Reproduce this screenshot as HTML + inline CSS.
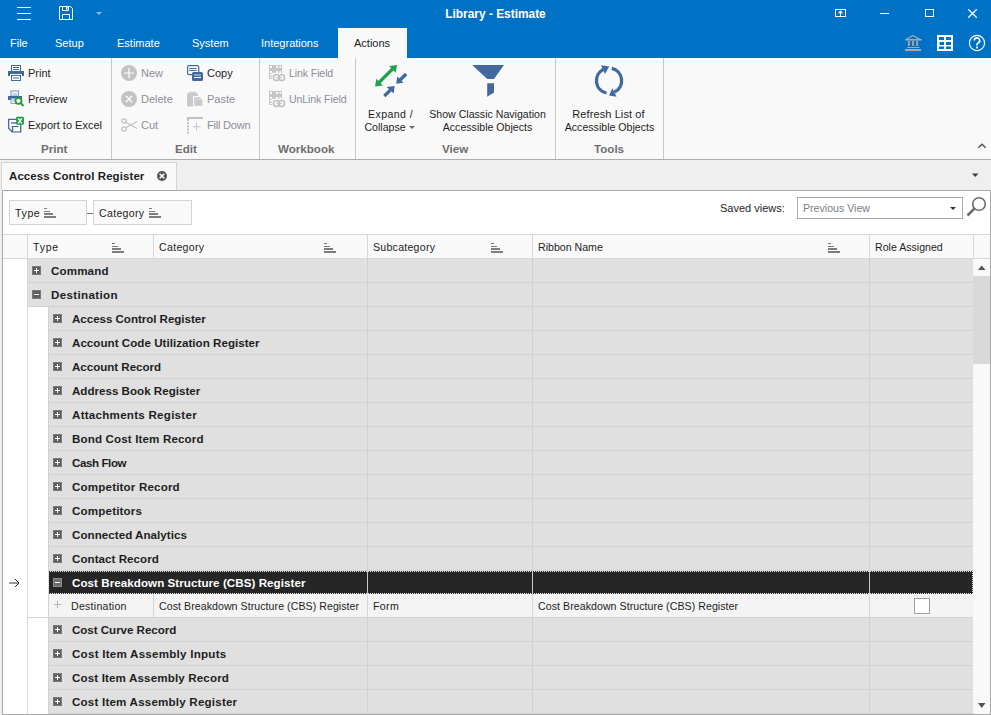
<!DOCTYPE html>
<html><head><meta charset="utf-8">
<style>
*{margin:0;padding:0;box-sizing:border-box}
html,body{width:991px;height:715px;overflow:hidden;background:#efefef;font-family:"Liberation Sans",sans-serif;font-size:10.6px;color:#1e1e1e}
.a{position:absolute;white-space:nowrap}
#title{position:absolute;left:0;top:0;width:991px;height:58px;background:#0072c6}
.wt{color:#fff}
#ribbon{position:absolute;left:0;top:58px;width:991px;height:102px;background:#f9f9f9;border-bottom:1px solid #adadad}
.sep{position:absolute;top:0;width:1px;height:101px;background:#c6c6c6}
.gl{position:absolute;top:84px;font-weight:bold;font-size:11.6px;color:#6f6f6f;line-height:14px}
.dis{color:#8d8d99}
#doctabs{position:absolute;left:0;top:160px;width:991px;height:30px;background:#efefef}
#panel{position:absolute;left:2px;top:190px;width:989px;height:525px;background:#fff;border:1px solid #a9a9a9}
.row{position:absolute;height:24px}
.bx{position:absolute;width:9px;height:9px;background:#5e5e5e;border:1px solid #7a7a7a}
.bx:before{content:"";position:absolute;left:1px;top:3px;width:5px;height:1px;background:#fff}
.bx.p:after{content:"";position:absolute;left:3px;top:1px;width:1px;height:5px;background:#fff}
.gt{position:absolute;top:4px;font-weight:bold;font-size:11.6px;line-height:16px;color:#1e1e1e}
.vl{position:absolute;width:1px;background:#d0d0d0}
.hl{position:absolute;height:1px;background:#d2d2d2}
</style></head><body>
<div id="title">
  <!-- hamburger -->
  <div class="a" style="left:17px;top:7px;width:14px;height:1px;background:#fff"></div>
  <div class="a" style="left:17px;top:13px;width:14px;height:1px;background:#fff"></div>
  <div class="a" style="left:17px;top:19px;width:14px;height:1px;background:#fff"></div>
  <!-- save -->
  <svg class="a" style="left:58px;top:5px" width="16" height="16" viewBox="0 0 16 16"><path d="M1.5 1.5h11l2 2v11h-13z" fill="none" stroke="#fff"/><path d="M4.5 1.5v4h6v-4M4.5 14.5v-5h7v5" fill="none" stroke="#fff"/><rect x="8" y="2" width="1.5" height="2.5" fill="#fff"/></svg>
  <svg class="a" style="left:96px;top:12px" width="7" height="4"><path d="M0 0h6l-3 3z" fill="#8fb9e2"/></svg>
  <div class="a wt" style="left:0;top:7px;width:991px;text-align:center;font-weight:bold;font-size:11.9px">Library - Estimate</div>
  <!-- window controls -->
  <svg class="a" style="left:835px;top:9px" width="11" height="8" viewBox="0 0 11 8"><rect x="0.5" y="0.5" width="10" height="7" fill="none" stroke="#fff"/><path d="M3 4.3L5.5 1.3 8 4.3z" fill="#fff"/><rect x="5" y="3" width="1" height="5" fill="#fff"/></svg>
  <div class="a" style="left:880px;top:13px;width:9px;height:1px;background:#fff"></div>
  <div class="a" style="left:925px;top:9px;width:9px;height:8px;border:1px solid #fff"></div>
  <svg class="a" style="left:968px;top:9px" width="9" height="9" viewBox="0 0 9 9"><path d="M0.3 0.3l8.4 8.4M8.7 0.3l-8.4 8.4" stroke="#fff" stroke-width="1.3"/></svg>
  <!-- tabs -->
  <div class="a wt" style="left:10px;top:37px;font-size:11px">File</div>
  <div class="a wt" style="left:55px;top:37px;font-size:11px">Setup</div>
  <div class="a wt" style="left:117px;top:37px;font-size:11px">Estimate</div>
  <div class="a wt" style="left:192px;top:37px;font-size:11px">System</div>
  <div class="a wt" style="left:261px;top:37px;font-size:11px">Integrations</div>
  <div class="a" style="left:338px;top:28px;width:69px;height:30px;background:#f9f9f9"></div>
  <div class="a" style="left:354px;top:37px;font-size:11px">Actions</div>
  <!-- right icons -->
  <svg class="a" style="left:905px;top:34px" width="17" height="17" viewBox="0 0 17 17"><path d="M1 5.5L8 1.5l7 4z" fill="none" stroke="#a8a8a8" stroke-width="1.1"/><rect x="0.5" y="5" width="16" height="1.6" fill="#a8a8a8"/><rect x="3" y="7" width="1.8" height="5" fill="#a8a8a8"/><rect x="7.1" y="7" width="1.8" height="5" fill="#a8a8a8"/><rect x="11.2" y="7" width="1.8" height="5" fill="#a8a8a8"/><rect x="2" y="13" width="12.5" height="1" fill="#a8a8a8"/><rect x="0" y="15" width="16" height="2" fill="#a8a8a8"/></svg>
  <svg class="a" style="left:937px;top:35px" width="16" height="16" viewBox="0 0 16 16"><path d="M0 0h16v16H0z M2 2v3h5V2z M9 2v3h5V2z M2.5 7v3h4.5V7z M9 7v3h5V7z M2 11.5V14h5v-2.5z M9 11.5V14h5v-2.5z" fill="#fff" fill-rule="evenodd"/></svg>
  <svg class="a" style="left:968px;top:34px" width="18" height="18" viewBox="0 0 18 18"><circle cx="9" cy="9" r="7.6" fill="none" stroke="#fff" stroke-width="1.2"/><path d="M6.3 6.6a2.7 2.7 0 1 1 3.7 2.5c-.7.3-1 .8-1 1.5v.8" fill="none" stroke="#fff" stroke-width="1.6"/><rect x="8.1" y="12.6" width="1.8" height="1.8" fill="#fff"/></svg>
</div>

<div id="ribbon">
  <div class="sep" style="left:111px"></div>
  <div class="sep" style="left:259px"></div>
  <div class="sep" style="left:355px"></div>
  <div class="sep" style="left:555px"></div>
  <div class="sep" style="left:663px"></div>
  <div class="gl" style="left:41px">Print</div>
  <div class="gl" style="left:175px">Edit</div>
  <div class="gl" style="left:278px">Workbook</div>
  <div class="gl" style="left:442px">View</div>
  <div class="gl" style="left:594px">Tools</div>
  <!-- print group -->
  <svg class="a" style="left:8px;top:7px" width="16" height="16" viewBox="0 0 16 16"><rect x="3.5" y="0.5" width="9" height="6" fill="#fff" stroke="#41699e"/><path d="M5 2.5h6M5 4.5h6" stroke="#41699e"/><path d="M0 6h16v5h-2v-2H2v2H0z" fill="#41699e"/><rect x="3.5" y="10.5" width="9" height="5" fill="#fff" stroke="#41699e"/><path d="M5 13h6" stroke="#41699e"/></svg>
  <div class="a" style="left:28px;top:9px;font-size:11px">Print</div>
  <svg class="a" style="left:8px;top:32px" width="17" height="18" viewBox="0 0 17 18"><rect x="3" y="1" width="7.5" height="5" fill="#fff" stroke="#7d98bf" stroke-width="1.1"/><path d="M4.5 4h4.5" stroke="#8aa2c4"/><path d="M0 6h14v3.5H11v-1H3v1.5H0z" fill="#41699e"/><rect x="3" y="9" width="5" height="4.5" fill="#fff" stroke="#8aa2c4" stroke-width="1"/><path d="M4 11h3" stroke="#9ab0cc"/><circle cx="10.5" cy="10.8" r="3" fill="#fff" stroke="#1fa02f" stroke-width="1.8"/><path d="M12.6 13l3 3" stroke="#1fa02f" stroke-width="1.9"/></svg>
  <div class="a" style="left:28px;top:35px;font-size:11px">Preview</div>
  <svg class="a" style="left:8px;top:58px" width="17" height="17" viewBox="0 0 17 17"><path d="M0.7 3.3h12v12.5H4.2L0.7 12.3z" fill="#fff" stroke="#41699e" stroke-width="1.3"/><path d="M3 7h6" stroke="#41699e" stroke-width="1.4"/><path d="M3.5 10.7h7" stroke="#41699e" stroke-width="1.4"/><rect x="4.6" y="11.2" width="7" height="4" fill="#fff"/><path d="M4.6 11.2v4.6" stroke="#41699e" stroke-width="1.3"/><rect x="8.2" y="0.8" width="7.7" height="8" rx="1" fill="#1e9e3a"/><path d="M10.2 2.3l3.6 5M13.8 2.3l-3.6 5" stroke="#fff" stroke-width="1.4"/></svg>
  <div class="a" style="left:28px;top:61px;font-size:11px">Export to Excel</div>
  <!-- edit group -->
  <svg class="a" style="left:121px;top:7px" width="16" height="16" viewBox="0 0 16 16"><circle cx="8" cy="8" r="8" fill="#c3c3c3"/><path d="M8 3v10M3 8h10" stroke="#fff" stroke-width="1.2"/></svg>
  <div class="a dis" style="left:141px;top:9px;font-size:11px">New</div>
  <svg class="a" style="left:121px;top:33px" width="16" height="16" viewBox="0 0 16 16"><circle cx="8" cy="8" r="8" fill="#c3c3c3"/><path d="M4.8 4.8l6.4 6.4M11.2 4.8l-6.4 6.4" stroke="#fff" stroke-width="1.3"/></svg>
  <div class="a dis" style="left:141px;top:35px;font-size:11px">Delete</div>
  <svg class="a" style="left:121px;top:60px" width="16" height="14" viewBox="0 0 16 14"><circle cx="3" cy="3" r="2.2" fill="none" stroke="#c3c3c3" stroke-width="1.3"/><circle cx="3" cy="11" r="2.2" fill="none" stroke="#c3c3c3" stroke-width="1.3"/><path d="M4.8 4.2L16 10.5M4.8 9.8L16 3.5" stroke="#c3c3c3" stroke-width="1.3"/></svg>
  <div class="a dis" style="left:141px;top:61px;font-size:11px">Cut</div>
  <svg class="a" style="left:187px;top:7px" width="17" height="17" viewBox="0 0 17 17"><rect x="0.6" y="0.6" width="11.2" height="9" rx="1.6" fill="#fff" stroke="#41699e" stroke-width="1.2"/><path d="M2.2 3.5h7.5M2.2 5.5h7.5" stroke="#41699e" stroke-width="1"/><rect x="5" y="7" width="11" height="9" rx="1.5" fill="#41699e"/><rect x="7" y="9.3" width="7" height="1.4" fill="#a9bdd6"/><path d="M7 12.5h7" stroke="#fff" stroke-width="1"/></svg>
  <div class="a" style="left:207px;top:9px;font-size:11px">Copy</div>
  <svg class="a" style="left:187px;top:33px" width="17" height="17" viewBox="0 0 17 17"><rect x="0" y="2" width="11" height="13.5" rx="1.5" fill="#cacaca"/><rect x="2" y="0.8" width="7" height="2.5" rx="1" fill="#cacaca"/><path d="M6.5 5.5h6l3.5 3.5v6.5H6.5z" fill="#d2d2d2" stroke="#f9f9f9" stroke-width="1"/><path d="M8.5 10.5h5.5M8.5 13h5.5" stroke="#bdbdbd" stroke-width="1"/></svg>
  <div class="a dis" style="left:207px;top:35px;font-size:11px">Paste</div>
  <svg class="a" style="left:187px;top:59px" width="17" height="17" viewBox="0 0 17 17"><rect x="0" y="0" width="16" height="2" fill="#c2c2c2"/><path d="M1 2v15" stroke="#c2c2c2" stroke-width="2" stroke-dasharray="2 1.2"/><path d="M9.5 6v7.5M5.8 9.8h7.5" stroke="#c4c4c4" stroke-width="1"/></svg>
  <div class="a dis" style="left:207px;top:61px;font-size:11px;letter-spacing:-0.2px">Fill Down</div>
  <!-- workbook -->
  <svg class="a" style="left:268px;top:7px" width="18" height="17" viewBox="0 0 18 17"><rect x="1" y="0" width="13" height="14" fill="#c6c6c6"/><g fill="#f9f9f9"><rect x="2" y="1" width="2" height="2"/><rect x="8" y="1" width="2" height="2"/><rect x="11.5" y="1" width="1.5" height="2"/><rect x="2" y="6" width="2" height="2"/><rect x="8" y="6" width="2" height="2"/><rect x="11.5" y="6" width="1.5" height="2"/><rect x="2" y="9" width="2" height="1.5"/><rect x="2" y="12" width="2" height="1"/></g><rect x="3.8" y="7.8" width="14" height="9" fill="#f9f9f9"/><rect x="5.5" y="9.5" width="5.5" height="6" rx="2.8" fill="none" stroke="#c2c2c2" stroke-width="1.7"/><rect x="11" y="9.5" width="5.5" height="6" rx="2.8" fill="none" stroke="#c2c2c2" stroke-width="1.7"/><path d="M8 12.5h6" stroke="#c8c8c8" stroke-width="1.2"/></svg>
  <div class="a dis" style="left:289px;top:9px;letter-spacing:-0.12px">Link Field</div>
  <svg class="a" style="left:268px;top:33px" width="18" height="17" viewBox="0 0 18 17"><rect x="1" y="0" width="13" height="14" fill="#c6c6c6"/><g fill="#f9f9f9"><rect x="2" y="1" width="2" height="2"/><rect x="8" y="1" width="2" height="2"/><rect x="11.5" y="1" width="1.5" height="2"/><rect x="2" y="6" width="2" height="2"/><rect x="8" y="6" width="2" height="2"/><rect x="11.5" y="6" width="1.5" height="2"/><rect x="2" y="9" width="2" height="1.5"/><rect x="2" y="12" width="2" height="1"/></g><rect x="3.8" y="7.8" width="14" height="9" fill="#f9f9f9"/><rect x="5.5" y="9.5" width="5.5" height="6" rx="2.8" fill="none" stroke="#c2c2c2" stroke-width="1.7"/><rect x="11" y="9.5" width="5.5" height="6" rx="2.8" fill="none" stroke="#c2c2c2" stroke-width="1.7"/><path d="M8 12.5h6" stroke="#c8c8c8" stroke-width="1.2"/></svg>
  <div class="a dis" style="left:289px;top:35px;letter-spacing:-0.12px">UnLink Field</div>
  <!-- view -->
  <svg class="a" style="left:370px;top:2px" width="40" height="40" viewBox="0 0 40 40"><path d="M9 22.5L23 8.5" stroke="#1fa24a" stroke-width="3.2"/><path d="M27 4.9L19.1 6.1 25.8 12.8z M5.1 26.6L6.3 18.8 12.9 25.6z" fill="#1fa24a"/><path d="M30 20L36.2 14" stroke="#41699e" stroke-width="3.2"/><path d="M26.2 23.8L27.3 16.6 33.5 22.8z" fill="#41699e"/><path d="M20.5 30L14.3 36" stroke="#41699e" stroke-width="3.2"/><path d="M24.6 26L16.6 26.9 23.7 33.5z" fill="#41699e"/></svg>
  <div class="a" style="left:358px;top:50px;width:63px;text-align:center;line-height:13px"><span style="letter-spacing:0.4px;position:relative;left:1px">Expand /</span><br>Collapse&nbsp;<svg width="6" height="4" style="vertical-align:1px"><path d="M0 0h6l-3 3z" fill="#6b6b6b"/></svg></div>
  <svg class="a" style="left:471px;top:6px" width="34" height="34" viewBox="0 0 34 34"><path d="M1.2 1h31.8l-10 14h-6.8z" fill="#41699e"/><path d="M16.2 19.3h6.8v9.2l-6.8 4.2z" fill="#41699e"/></svg>
  <div class="a" style="left:420px;top:50px;width:135px;text-align:center;line-height:13px">Show Classic Navigation<br>Accessible Objects</div>
  <!-- tools -->
  <svg class="a" style="left:593px;top:65px;display:none" width="1" height="1"></svg>
  <svg class="a" style="left:590px;top:2px" width="40" height="40" viewBox="0 0 40 40"><path d="M16.4 33A12.6 12.6 0 0 1 13.6 9.3" fill="none" stroke="#41699e" stroke-width="3.3"/><path d="M11 5.2L19.2 6.6 15 14z" fill="#41699e"/><path d="M21.8 8.4A12.6 12.6 0 0 1 24.4 32.1" fill="none" stroke="#41699e" stroke-width="3.3"/><path d="M22.4 28.3L19 35.6 26.5 36.8z" fill="#41699e"/></svg>
  <div class="a" style="left:556px;top:50px;width:107px;text-align:center;line-height:13px"><span style="font-size:11px;letter-spacing:0.1px;position:relative;left:-1px">Refresh List of</span><br>Accessible Objects</div>
  <svg class="a" style="left:978px;top:85px" width="9" height="6"><path d="M0.3 4.8L4 1.2l3.7 3.6" fill="none" stroke="#555" stroke-width="1.5"/></svg>
</div>

<div id="doctabs">
  <div class="a" style="left:1px;top:2px;width:176px;height:28px;background:#f9f9f9;border:1px solid #d4d4d4;border-bottom:none"></div>
  <div class="a" style="left:9px;top:10px;font-weight:bold;font-size:11.5px;color:#1e1e1e;letter-spacing:0.08px">Access Control Register</div>
  <svg class="a" style="left:157px;top:11px" width="10" height="10"><circle cx="5" cy="5" r="5" fill="#555"/><path d="M2.7 2.7l4.6 4.6M7.3 2.7l-4.6 4.6" stroke="#fff" stroke-width="1.5"/></svg>
  <svg class="a" style="left:972px;top:13px" width="7" height="5"><path d="M0 0.5h6.5l-3.25 3.5z" fill="#3a3a3a"/></svg>
</div>

<div id="panel"></div>
<div class="a" style="left:9px;top:200px;width:78px;height:25px;background:#f9f9f9;border:1px solid #d4d4d4"></div>
<div class="a" style="left:15px;top:207px;letter-spacing:0.6px">Type</div>
<div class="a" style="left:44px;top:208px;width:3px;height:1px;background:#7d7d7d"></div><div class="a" style="left:44px;top:211px;width:6px;height:1px;background:#7d7d7d"></div><div class="a" style="left:44px;top:213px;width:9px;height:2px;background:#7d7d7d"></div><div class="a" style="left:44px;top:216px;width:12px;height:2px;background:#7d7d7d"></div>
<div class="a" style="left:87px;top:213px;width:6px;height:1px;background:#7a7a7a"></div>
<div class="a" style="left:93px;top:200px;width:99px;height:25px;background:#f9f9f9;border:1px solid #d4d4d4"></div>
<div class="a" style="left:99px;top:207px;letter-spacing:0.3px">Category</div>
<div class="a" style="left:149px;top:208px;width:3px;height:1px;background:#7d7d7d"></div><div class="a" style="left:149px;top:211px;width:6px;height:1px;background:#7d7d7d"></div><div class="a" style="left:149px;top:213px;width:9px;height:2px;background:#7d7d7d"></div><div class="a" style="left:149px;top:216px;width:12px;height:2px;background:#7d7d7d"></div>
<div class="a" style="left:720px;top:202px;font-size:11px">Saved views:</div>
<div class="a" style="left:797px;top:197px;width:166px;height:22px;background:#fff;border:1px solid #acacac"></div>
<div class="a" style="left:803px;top:202px;color:#7a7d88">Previous View</div>
<svg class="a" style="left:950px;top:207px" width="6" height="4"><path d="M0 0h6l-3 3z" fill="#333"/></svg>
<svg class="a" style="left:966px;top:196px" width="21" height="21" viewBox="0 0 21 21"><circle cx="13" cy="8" r="6.3" fill="none" stroke="#6b6b6b" stroke-width="1.6"/><path d="M8.6 12.4L1.5 19.5" stroke="#6b6b6b" stroke-width="2.6"/></svg>
<div class="a" style="left:3px;top:234px;width:987px;height:25px;background:#f9f9f9;border-top:1px solid #d8d8d8;border-bottom:1px solid #d8d8d8"></div>
<div class="a" style="left:27px;top:235px;width:1px;height:23px;background:#d8d8d8"></div>
<div class="a" style="left:153px;top:235px;width:1px;height:23px;background:#d8d8d8"></div>
<div class="a" style="left:367px;top:235px;width:1px;height:23px;background:#d8d8d8"></div>
<div class="a" style="left:532px;top:235px;width:1px;height:23px;background:#d8d8d8"></div>
<div class="a" style="left:869px;top:235px;width:1px;height:23px;background:#d8d8d8"></div>
<div class="a" style="left:973px;top:235px;width:1px;height:23px;background:#d8d8d8"></div>
<div class="a" style="left:33px;top:241px;letter-spacing:0.75px">Type</div>
<div class="a" style="left:159px;top:241px;letter-spacing:0.3px">Category</div>
<div class="a" style="left:373px;top:241px;letter-spacing:0.25px">Subcategory</div>
<div class="a" style="left:538px;top:241px;letter-spacing:0px">Ribbon Name</div>
<div class="a" style="left:875px;top:241px;letter-spacing:0px">Role Assigned</div>
<div class="a" style="left:112px;top:243px;width:3px;height:1px;background:#7d7d7d"></div><div class="a" style="left:112px;top:246px;width:6px;height:1px;background:#7d7d7d"></div><div class="a" style="left:112px;top:248px;width:9px;height:2px;background:#7d7d7d"></div><div class="a" style="left:112px;top:251px;width:12px;height:2px;background:#7d7d7d"></div>
<div class="a" style="left:324px;top:243px;width:3px;height:1px;background:#7d7d7d"></div><div class="a" style="left:324px;top:246px;width:6px;height:1px;background:#7d7d7d"></div><div class="a" style="left:324px;top:248px;width:9px;height:2px;background:#7d7d7d"></div><div class="a" style="left:324px;top:251px;width:12px;height:2px;background:#7d7d7d"></div>
<div class="a" style="left:491px;top:243px;width:3px;height:1px;background:#7d7d7d"></div><div class="a" style="left:491px;top:246px;width:6px;height:1px;background:#7d7d7d"></div><div class="a" style="left:491px;top:248px;width:9px;height:2px;background:#7d7d7d"></div><div class="a" style="left:491px;top:251px;width:12px;height:2px;background:#7d7d7d"></div>
<div class="a" style="left:828px;top:243px;width:3px;height:1px;background:#7d7d7d"></div><div class="a" style="left:828px;top:246px;width:6px;height:1px;background:#7d7d7d"></div><div class="a" style="left:828px;top:248px;width:9px;height:2px;background:#7d7d7d"></div><div class="a" style="left:828px;top:251px;width:12px;height:2px;background:#7d7d7d"></div>
<div class="a" style="left:27px;top:259px;width:1px;height:455px;background:#d8d8d8"></div>
<div class="a" style="left:28px;top:259px;width:945px;height:23px;background:#e0e0e0"></div>
<div class="a" style="left:28px;top:282px;width:945px;height:1px;background:#d2d2d2"></div>
<div class="a" style="left:367px;top:259px;width:1px;height:23px;background:#d0d0d0"></div>
<div class="a" style="left:532px;top:259px;width:1px;height:23px;background:#d0d0d0"></div>
<div class="a" style="left:869px;top:259px;width:1px;height:23px;background:#d0d0d0"></div>
<div class="bx p" style="left:32px;top:266px;"></div>
<div class="gt" style="left:51px;top:263px;color:#1e1e1e;letter-spacing:0.133px">Command</div>
<div class="a" style="left:28px;top:283px;width:945px;height:23px;background:#e0e0e0"></div>
<div class="a" style="left:28px;top:306px;width:945px;height:1px;background:#d2d2d2"></div>
<div class="a" style="left:367px;top:283px;width:1px;height:23px;background:#d0d0d0"></div>
<div class="a" style="left:532px;top:283px;width:1px;height:23px;background:#d0d0d0"></div>
<div class="a" style="left:869px;top:283px;width:1px;height:23px;background:#d0d0d0"></div>
<div class="bx" style="left:32px;top:290px;"></div>
<div class="gt" style="left:51px;top:287px;color:#1e1e1e;letter-spacing:0.35px">Destination</div>
<div class="a" style="left:49px;top:307px;width:924px;height:23px;background:#e0e0e0"></div>
<div class="a" style="left:48px;top:307px;width:1px;height:23px;background:#d2d2d2"></div>
<div class="a" style="left:48px;top:330px;width:925px;height:1px;background:#d2d2d2"></div>
<div class="a" style="left:367px;top:307px;width:1px;height:23px;background:#d0d0d0"></div>
<div class="a" style="left:532px;top:307px;width:1px;height:23px;background:#d0d0d0"></div>
<div class="a" style="left:869px;top:307px;width:1px;height:23px;background:#d0d0d0"></div>
<div class="bx p" style="left:53px;top:314px;"></div>
<div class="gt" style="left:72px;top:311px;color:#1e1e1e;letter-spacing:-0.045px">Access Control Register</div>
<div class="a" style="left:49px;top:331px;width:924px;height:23px;background:#e0e0e0"></div>
<div class="a" style="left:48px;top:331px;width:1px;height:23px;background:#d2d2d2"></div>
<div class="a" style="left:48px;top:354px;width:925px;height:1px;background:#d2d2d2"></div>
<div class="a" style="left:367px;top:331px;width:1px;height:23px;background:#d0d0d0"></div>
<div class="a" style="left:532px;top:331px;width:1px;height:23px;background:#d0d0d0"></div>
<div class="a" style="left:869px;top:331px;width:1px;height:23px;background:#d0d0d0"></div>
<div class="bx p" style="left:53px;top:338px;"></div>
<div class="gt" style="left:72px;top:335px;color:#1e1e1e;letter-spacing:0.025px">Account Code Utilization Register</div>
<div class="a" style="left:49px;top:355px;width:924px;height:23px;background:#e0e0e0"></div>
<div class="a" style="left:48px;top:355px;width:1px;height:23px;background:#d2d2d2"></div>
<div class="a" style="left:48px;top:378px;width:925px;height:1px;background:#d2d2d2"></div>
<div class="a" style="left:367px;top:355px;width:1px;height:23px;background:#d0d0d0"></div>
<div class="a" style="left:532px;top:355px;width:1px;height:23px;background:#d0d0d0"></div>
<div class="a" style="left:869px;top:355px;width:1px;height:23px;background:#d0d0d0"></div>
<div class="bx p" style="left:53px;top:362px;"></div>
<div class="gt" style="left:72px;top:359px;color:#1e1e1e;letter-spacing:-0.038px">Account Record</div>
<div class="a" style="left:49px;top:379px;width:924px;height:23px;background:#e0e0e0"></div>
<div class="a" style="left:48px;top:379px;width:1px;height:23px;background:#d2d2d2"></div>
<div class="a" style="left:48px;top:402px;width:925px;height:1px;background:#d2d2d2"></div>
<div class="a" style="left:367px;top:379px;width:1px;height:23px;background:#d0d0d0"></div>
<div class="a" style="left:532px;top:379px;width:1px;height:23px;background:#d0d0d0"></div>
<div class="a" style="left:869px;top:379px;width:1px;height:23px;background:#d0d0d0"></div>
<div class="bx p" style="left:53px;top:386px;"></div>
<div class="gt" style="left:72px;top:383px;color:#1e1e1e;letter-spacing:0.0px">Address Book Register</div>
<div class="a" style="left:49px;top:403px;width:924px;height:23px;background:#e0e0e0"></div>
<div class="a" style="left:48px;top:403px;width:1px;height:23px;background:#d2d2d2"></div>
<div class="a" style="left:48px;top:426px;width:925px;height:1px;background:#d2d2d2"></div>
<div class="a" style="left:367px;top:403px;width:1px;height:23px;background:#d0d0d0"></div>
<div class="a" style="left:532px;top:403px;width:1px;height:23px;background:#d0d0d0"></div>
<div class="a" style="left:869px;top:403px;width:1px;height:23px;background:#d0d0d0"></div>
<div class="bx p" style="left:53px;top:410px;"></div>
<div class="gt" style="left:72px;top:407px;color:#1e1e1e;letter-spacing:0.253px">Attachments Register</div>
<div class="a" style="left:49px;top:427px;width:924px;height:23px;background:#e0e0e0"></div>
<div class="a" style="left:48px;top:427px;width:1px;height:23px;background:#d2d2d2"></div>
<div class="a" style="left:48px;top:450px;width:925px;height:1px;background:#d2d2d2"></div>
<div class="a" style="left:367px;top:427px;width:1px;height:23px;background:#d0d0d0"></div>
<div class="a" style="left:532px;top:427px;width:1px;height:23px;background:#d0d0d0"></div>
<div class="a" style="left:869px;top:427px;width:1px;height:23px;background:#d0d0d0"></div>
<div class="bx p" style="left:53px;top:434px;"></div>
<div class="gt" style="left:72px;top:431px;color:#1e1e1e;letter-spacing:0.135px">Bond Cost Item Record</div>
<div class="a" style="left:49px;top:451px;width:924px;height:23px;background:#e0e0e0"></div>
<div class="a" style="left:48px;top:451px;width:1px;height:23px;background:#d2d2d2"></div>
<div class="a" style="left:48px;top:474px;width:925px;height:1px;background:#d2d2d2"></div>
<div class="a" style="left:367px;top:451px;width:1px;height:23px;background:#d0d0d0"></div>
<div class="a" style="left:532px;top:451px;width:1px;height:23px;background:#d0d0d0"></div>
<div class="a" style="left:869px;top:451px;width:1px;height:23px;background:#d0d0d0"></div>
<div class="bx p" style="left:53px;top:458px;"></div>
<div class="gt" style="left:72px;top:455px;color:#1e1e1e;letter-spacing:-0.425px">Cash Flow</div>
<div class="a" style="left:49px;top:475px;width:924px;height:23px;background:#e0e0e0"></div>
<div class="a" style="left:48px;top:475px;width:1px;height:23px;background:#d2d2d2"></div>
<div class="a" style="left:48px;top:498px;width:925px;height:1px;background:#d2d2d2"></div>
<div class="a" style="left:367px;top:475px;width:1px;height:23px;background:#d0d0d0"></div>
<div class="a" style="left:532px;top:475px;width:1px;height:23px;background:#d0d0d0"></div>
<div class="a" style="left:869px;top:475px;width:1px;height:23px;background:#d0d0d0"></div>
<div class="bx p" style="left:53px;top:482px;"></div>
<div class="gt" style="left:72px;top:479px;color:#1e1e1e;letter-spacing:0.169px">Competitor Record</div>
<div class="a" style="left:49px;top:499px;width:924px;height:23px;background:#e0e0e0"></div>
<div class="a" style="left:48px;top:499px;width:1px;height:23px;background:#d2d2d2"></div>
<div class="a" style="left:48px;top:522px;width:925px;height:1px;background:#d2d2d2"></div>
<div class="a" style="left:367px;top:499px;width:1px;height:23px;background:#d0d0d0"></div>
<div class="a" style="left:532px;top:499px;width:1px;height:23px;background:#d0d0d0"></div>
<div class="a" style="left:869px;top:499px;width:1px;height:23px;background:#d0d0d0"></div>
<div class="bx p" style="left:53px;top:506px;"></div>
<div class="gt" style="left:72px;top:503px;color:#1e1e1e;letter-spacing:0.17px">Competitors</div>
<div class="a" style="left:49px;top:523px;width:924px;height:23px;background:#e0e0e0"></div>
<div class="a" style="left:48px;top:523px;width:1px;height:23px;background:#d2d2d2"></div>
<div class="a" style="left:48px;top:546px;width:925px;height:1px;background:#d2d2d2"></div>
<div class="a" style="left:367px;top:523px;width:1px;height:23px;background:#d0d0d0"></div>
<div class="a" style="left:532px;top:523px;width:1px;height:23px;background:#d0d0d0"></div>
<div class="a" style="left:869px;top:523px;width:1px;height:23px;background:#d0d0d0"></div>
<div class="bx p" style="left:53px;top:530px;"></div>
<div class="gt" style="left:72px;top:527px;color:#1e1e1e;letter-spacing:0.039px">Connected Analytics</div>
<div class="a" style="left:49px;top:547px;width:924px;height:23px;background:#e0e0e0"></div>
<div class="a" style="left:48px;top:547px;width:1px;height:23px;background:#d2d2d2"></div>
<div class="a" style="left:48px;top:570px;width:925px;height:1px;background:#d2d2d2"></div>
<div class="a" style="left:367px;top:547px;width:1px;height:23px;background:#d0d0d0"></div>
<div class="a" style="left:532px;top:547px;width:1px;height:23px;background:#d0d0d0"></div>
<div class="a" style="left:869px;top:547px;width:1px;height:23px;background:#d0d0d0"></div>
<div class="bx p" style="left:53px;top:554px;"></div>
<div class="gt" style="left:72px;top:551px;color:#1e1e1e;letter-spacing:0.038px">Contact Record</div>
<div class="a" style="left:49px;top:571px;width:924px;height:23px;background:#262626"></div>
<div class="a" style="left:48px;top:571px;width:1px;height:23px;background:#d2d2d2"></div>
<div class="a" style="left:367px;top:571px;width:1px;height:23px;background:#c8c8c8"></div>
<div class="a" style="left:532px;top:571px;width:1px;height:23px;background:#c8c8c8"></div>
<div class="a" style="left:869px;top:571px;width:1px;height:23px;background:#c8c8c8"></div>
<div class="a" style="left:48px;top:571px;width:925px;height:23px;border:1px dotted #e8e8e8;border-left:1px dotted #e8e8e8"></div>
<div class="bx" style="left:53px;top:578px;background:#6e6e6e;border-color:#8c8c8c"></div>
<div class="gt" style="left:72px;top:575px;color:#fff;letter-spacing:0.058px">Cost Breakdown Structure (CBS) Register</div>
<div class="a" style="left:49px;top:594px;width:924px;height:23px;background:#f4f4f4"></div>
<div class="a" style="left:28px;top:617px;width:945px;height:1px;background:#d2d2d2"></div>
<div class="a" style="left:48px;top:594px;width:1px;height:23px;background:#d2d2d2"></div>
<div class="a" style="left:153px;top:594px;width:1px;height:23px;background:#d6d6d6"></div>
<div class="a" style="left:367px;top:594px;width:1px;height:23px;background:#d6d6d6"></div>
<div class="a" style="left:532px;top:594px;width:1px;height:23px;background:#d6d6d6"></div>
<div class="a" style="left:869px;top:594px;width:1px;height:23px;background:#d6d6d6"></div>
<svg class="a" style="left:54px;top:601px" width="8" height="8"><path d="M3.5 0v7M0 3.5h7" stroke="#b4b4b4"/></svg>
<div class="a" style="left:71px;top:600px;letter-spacing:0.25px">Destination</div>
<div class="a" style="left:159px;top:600px;letter-spacing:0.06px">Cost Breakdown Structure (CBS) Register</div>
<div class="a" style="left:373px;top:600px;letter-spacing:0.35px">Form</div>
<div class="a" style="left:538px;top:600px;letter-spacing:0.06px">Cost Breakdown Structure (CBS) Register</div>
<div class="a" style="left:914px;top:598px;width:16px;height:16px;background:#fff;border:1px solid #a0a0a0"></div>
<div class="a" style="left:49px;top:618px;width:924px;height:23px;background:#e0e0e0"></div>
<div class="a" style="left:48px;top:618px;width:1px;height:23px;background:#d2d2d2"></div>
<div class="a" style="left:48px;top:641px;width:925px;height:1px;background:#d2d2d2"></div>
<div class="a" style="left:367px;top:618px;width:1px;height:23px;background:#d0d0d0"></div>
<div class="a" style="left:532px;top:618px;width:1px;height:23px;background:#d0d0d0"></div>
<div class="a" style="left:869px;top:618px;width:1px;height:23px;background:#d0d0d0"></div>
<div class="bx p" style="left:53px;top:625px;"></div>
<div class="gt" style="left:72px;top:622px;color:#1e1e1e;letter-spacing:-0.044px">Cost Curve Record</div>
<div class="a" style="left:49px;top:642px;width:924px;height:23px;background:#e0e0e0"></div>
<div class="a" style="left:48px;top:642px;width:1px;height:23px;background:#d2d2d2"></div>
<div class="a" style="left:48px;top:665px;width:925px;height:1px;background:#d2d2d2"></div>
<div class="a" style="left:367px;top:642px;width:1px;height:23px;background:#d0d0d0"></div>
<div class="a" style="left:532px;top:642px;width:1px;height:23px;background:#d0d0d0"></div>
<div class="a" style="left:869px;top:642px;width:1px;height:23px;background:#d0d0d0"></div>
<div class="bx p" style="left:53px;top:649px;"></div>
<div class="gt" style="left:72px;top:646px;color:#1e1e1e;letter-spacing:0.242px">Cost Item Assembly Inputs</div>
<div class="a" style="left:49px;top:666px;width:924px;height:23px;background:#e0e0e0"></div>
<div class="a" style="left:48px;top:666px;width:1px;height:23px;background:#d2d2d2"></div>
<div class="a" style="left:48px;top:689px;width:925px;height:1px;background:#d2d2d2"></div>
<div class="a" style="left:367px;top:666px;width:1px;height:23px;background:#d0d0d0"></div>
<div class="a" style="left:532px;top:666px;width:1px;height:23px;background:#d0d0d0"></div>
<div class="a" style="left:869px;top:666px;width:1px;height:23px;background:#d0d0d0"></div>
<div class="bx p" style="left:53px;top:673px;"></div>
<div class="gt" style="left:72px;top:670px;color:#1e1e1e;letter-spacing:0.138px">Cost Item Assembly Record</div>
<div class="a" style="left:49px;top:690px;width:924px;height:23px;background:#e0e0e0"></div>
<div class="a" style="left:48px;top:690px;width:1px;height:23px;background:#d2d2d2"></div>
<div class="a" style="left:48px;top:713px;width:925px;height:1px;background:#d2d2d2"></div>
<div class="a" style="left:367px;top:690px;width:1px;height:23px;background:#d0d0d0"></div>
<div class="a" style="left:532px;top:690px;width:1px;height:23px;background:#d0d0d0"></div>
<div class="a" style="left:869px;top:690px;width:1px;height:23px;background:#d0d0d0"></div>
<div class="bx p" style="left:53px;top:697px;"></div>
<div class="gt" style="left:72px;top:694px;color:#1e1e1e;letter-spacing:0.196px">Cost Item Assembly Register</div>
<svg class="a" style="left:9px;top:578px" width="11" height="10"><path d="M0 5h10M6 1l4 4-4 4" fill="none" stroke="#333" stroke-width="1"/></svg>
<div class="a" style="left:973px;top:259px;width:17px;height:455px;background:#f9f9f9"></div>
<svg class="a" style="left:978px;top:265px" width="8" height="5"><path d="M0 5h7.5l-3.75-4.5z" fill="#555"/></svg>
<div class="a" style="left:973px;top:276px;width:17px;height:88px;background:#d9d9d9"></div>
<svg class="a" style="left:978px;top:703px" width="8" height="6"><path d="M0 0h7.5l-3.75 5z" fill="#555"/></svg>
</body></html>
